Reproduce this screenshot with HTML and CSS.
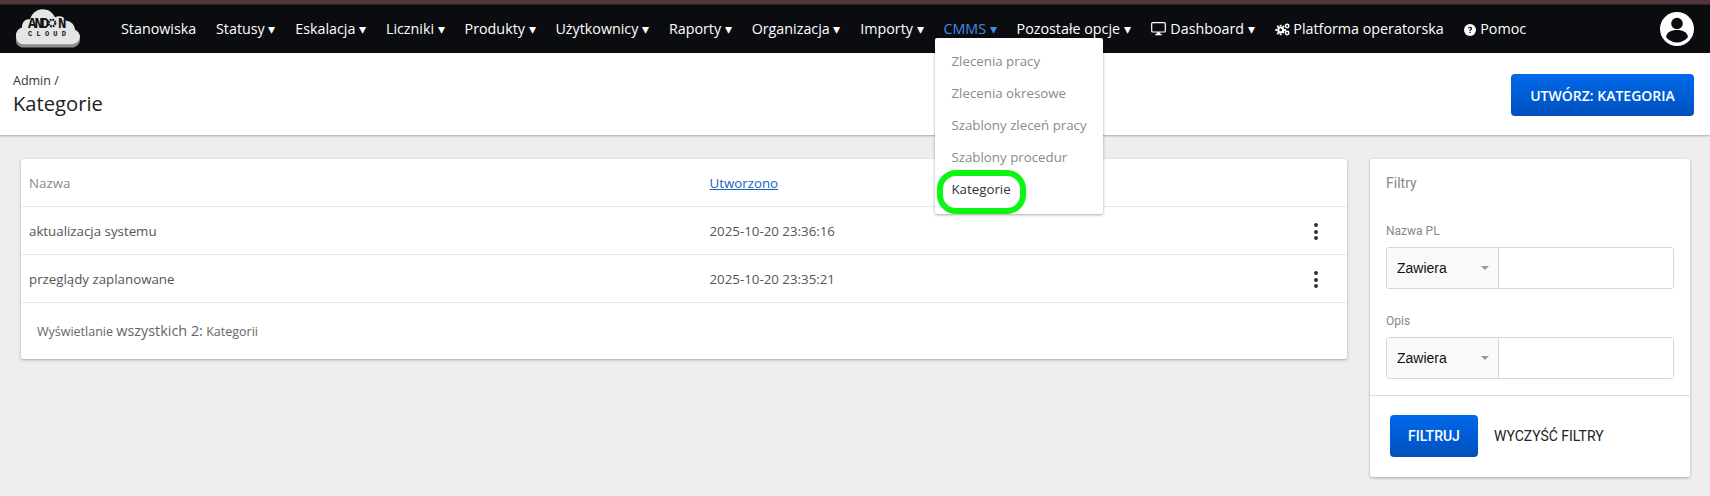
FILE: index.html
```html
<!DOCTYPE html>
<html lang="pl">
<head>
<meta charset="utf-8">
<title>Kategorie</title>
<link rel="stylesheet" href="styles.css">
</head>
<body>
<div class="topstrip"></div>
<nav class="navbar">
  <svg class="logo" viewBox="0 0 66 44" width="66" height="44">
    <g transform="translate(0,-2) scale(1,1.12)">
      <path class="logo-shade" d="M9 38c-6 0-9-4-8-9 0-4 3-6 6-7 0-5 4-8 8-7 2-6 8-10 14-9 5 0 9 3 11 7 4-2 9-1 11 3 5 0 9 4 9 8 3 1 5 4 5 7 0 4-4 7-8 7z"/>
      <path class="logo-cloud" d="M9 35c-6 0-8-4-8-8 0-4 3-6 6-7 0-5 4-8 8-7 2-6 8-10 14-9 5 0 9 3 11 7 4-2 9-1 11 3 5 0 9 4 9 8 3 1 5 4 5 6 0 4-4 7-8 7z"/>
    </g>
    <text class="logo-top" x="13" y="21">AND</text>
    <circle class="logo-gear" cx="37" cy="16" r="3.300"/>
    <text class="logo-top" x="43" y="21">N</text>
    <text class="logo-bottom" x="13" y="29" textLength="38">CLOUD</text>
  </svg>
  <ul class="menu">
    <li class="menu-item">Stanowiska</li>
    <li class="menu-item">Statusy ▾</li>
    <li class="menu-item">Eskalacja ▾</li>
    <li class="menu-item">Liczniki ▾</li>
    <li class="menu-item">Produkty ▾</li>
    <li class="menu-item">Użytkownicy ▾</li>
    <li class="menu-item">Raporty ▾</li>
    <li class="menu-item">Organizacja ▾</li>
    <li class="menu-item">Importy ▾</li>
    <li class="menu-item menu-active">CMMS ▾
      <div class="dropdown">
        <a class="dropdown-item">Zlecenia pracy</a>
        <a class="dropdown-item">Zlecenia okresowe</a>
        <a class="dropdown-item">Szablony zleceń pracy</a>
        <a class="dropdown-item">Szablony procedur</a>
        <a class="dropdown-item dropdown-current">Kategorie</a>
        <span class="highlight"></span>
      </div>
    </li>
    <li class="menu-item">Pozostałe opcje ▾</li>
    <li class="menu-item">
      <svg class="icon-desktop" viewBox="0 0 16 15" width="15" height="14"><rect x="0.7" y="0.7" width="14.6" height="10" rx="1" fill="none" stroke="#fff" stroke-width="1.3"/><path d="M6.2 11h3.6l.4 2.4H5.800zM4.200 13.200h7.600v1.100H4.200z" fill="#fff"/></svg>
      Dashboard ▾</li>
    <li class="menu-item">
      <svg class="icon-cogs" viewBox="0 0 16 14" width="15" height="13"><g fill="#fff"><circle cx="6" cy="7.500" r="3.700"/><path d="M5 1.800h2v2H5zM5 11.200h2v2H5zM.3 6.500h2v2h-2zM9.700 6.500h2v2h-2zM1.600 3.800l1.400-1.400 1.400 1.400-1.400 1.400zM7.600 9.800L9 8.400l1.400 1.400L9 11.200zM1.600 11.200l1.400-1.400 1.400 1.400-1.400 1.400zM7.600 3.800L9 2.400l1.400 1.400L9 5.200z"/><circle cx="13" cy="3.200" r="2.600"/><circle cx="13" cy="10.800" r="2.600"/></g><circle cx="6" cy="7.500" r="1.500" fill="#0b0c10"/><circle cx="13" cy="3.200" r="1" fill="#0b0c10"/><circle cx="13" cy="10.800" r="1" fill="#0b0c10"/></svg>
      Platforma operatorska</li>
    <li class="menu-item">
      <svg class="icon-help" viewBox="0 0 12 12" width="12" height="12"><circle cx="6" cy="6" r="6" fill="#fff"/><path d="M4 4.600C4.100 3.400 5 2.800 6.100 2.800c1.200 0 2 .7 2 1.700 0 1.500-1.600 1.400-1.600 2.600H5.300c0-1.800 1.500-1.700 1.500-2.600 0-.4-.3-.7-.8-.7-.5 0-.8.3-.9.8zM5.300 7.800h1.300v1.300H5.300z" fill="#0b0c10"/></svg>
      Pomoc</li>
  </ul>
  <svg class="avatar" viewBox="0 0 34 34" width="34" height="34"><circle cx="17" cy="17" r="17" fill="#fff"/><circle cx="17" cy="11.500" r="5.800" fill="#0b0c10"/><path d="M6 25c1-5 5-7 11-7s10 2 11 7c-2.800 3.600-6.800 5.500-11 5.500S8.800 28.600 6 25z" fill="#0b0c10"/></svg>
</nav>
<header class="pagehead">
  <div class="titles">
    <div class="crumb">Admin /</div>
    <h1 class="title">Kategorie</h1>
  </div>
  <button class="btn btn-create">UTWÓRZ: KATEGORIA</button>
</header>
<main class="content">
  <section class="card list">
    <div class="row row-head">
      <span class="col-name">Nazwa</span>
      <a class="col-date sort-link">Utworzono</a>
    </div>
    <div class="row">
      <span class="col-name">aktualizacja systemu</span>
      <span class="col-date">2025-10-20 23:36:16</span>
      <span class="kebab"><i></i><i></i><i></i></span>
    </div>
    <div class="row">
      <span class="col-name">przeglądy zaplanowane</span>
      <span class="col-date">2025-10-20 23:35:21</span>
      <span class="kebab"><i></i><i></i><i></i></span>
    </div>
    <div class="list-foot">Wyświetlanie <span class="foot-big">wszystkich 2:</span> Kategorii</div>
  </section>
  <aside class="card filters">
    <div class="filters-body">
      <div class="filters-title">Filtry</div>
      <label class="filter-label filter-label-first">Nazwa PL</label>
      <div class="filter-control">
        <div class="filter-select">Zawiera<span class="select-caret"></span></div>
        <div class="filter-input"></div>
      </div>
      <label class="filter-label">Opis</label>
      <div class="filter-control">
        <div class="filter-select">Zawiera<span class="select-caret"></span></div>
        <div class="filter-input"></div>
      </div>
    </div>
    <div class="filters-foot">
      <button class="btn btn-filter">FILTRUJ</button>
      <a class="clear-link">WYCZYŚĆ FILTRY</a>
    </div>
  </aside>
</main>
</body>
</html>
```
FILE: styles.css
```css
* { box-sizing: border-box; }
html, body { margin: 0; padding: 0; }
body {
  background: #eee;
  font-family: "Open Sans", sans-serif;
  color: #4a4a4a;
  height: 496px;
  overflow: hidden;
}
.topstrip { height: 5px; background: #53363c; border-bottom: 1px solid #2f2528; }
.navbar {
  height: 48px;
  background: #0b0c10;
  display: flex;
  align-items: center;
  padding: 0 16px 0 15px;
  position: relative;
  z-index: 3;
}
.logo { flex: none; }
.logo-cloud { fill: #e4e4e4; }
.logo-shade { fill: #8d8d8d; }
.logo-top { font: bold 14px "Liberation Mono", monospace; fill: #111; letter-spacing: -2px; }
.logo-bottom { font: bold 7px "Liberation Mono", monospace; fill: #111; }
.logo-gear { fill: none; stroke: #111; stroke-width: 2.200; stroke-dasharray: 1.700 .9; }
.menu {
  list-style: none;
  margin: 0 0 0 40px;
  padding: 0;
  display: flex;
  gap: 19.8px;
  flex: 1;
  align-items: center;
}
.menu-item {
  color: #fff;
  font-size: 14.3px;
  line-height: 20px;
  white-space: nowrap;
  position: relative;
}
.menu-active { color: #3f8ce8; }
.icon-desktop, .icon-cogs, .icon-help { vertical-align: -2px; }
.icon-help { margin-right: 1px; }
.icon-desktop { margin-right: 1px; }
.avatar { flex: none; }
.dropdown {
  position: absolute;
  left: -8px;
  top: 19px;
  width: 168px;
  height: 176px;
  background: #fff;
  border-radius: 2px;
  box-shadow: 0 1px 3px rgba(0,0,0,.35);
  padding: 7px 0 0;
  display: flex;
  flex-direction: column;
}
.dropdown-item {
  display: block;
  padding: 0 16px;
  height: 32px;
  line-height: 32px;
  font-size: 13.3px;
  color: #8a8a8a;
}
.dropdown-current { color: #333; }
.highlight {
  position: absolute;
  left: 2px;
  top: 132px;
  width: 89px;
  height: 44px;
  border: 6px solid #0cf412;
  border-radius: 19px;
}
.pagehead {
  height: 82px;
  background: #fff;
  box-shadow: 0 1px 2px rgba(0,0,0,.3);
  display: flex;
  align-items: flex-start;
  justify-content: space-between;
  padding: 20px 16px 0 13px;
  position: relative;
  z-index: 2;
}
.crumb { font-size: 12.5px; line-height: 16px; color: #333; }
.title { margin: 0; font-size: 20.2px; font-weight: 400; line-height: 28px; color: #222; }
.btn {
  border: 0;
  border-radius: 4px;
  background: linear-gradient(#0069eb, #0051bd);
  color: #fff;
  font-family: "Open Sans", sans-serif;
  font-weight: 600;
  font-size: 14px;
  height: 42px;
}
.btn-create { width: 183px; margin-top: 1px; padding: 0; }
.content {
  display: flex;
  align-items: flex-start;
  gap: 23px;
  padding: 24px 20px 0 21px;
}
.card {
  background: #fff;
  border-radius: 2px;
  box-shadow: 0 1px 3px rgba(0,0,0,.3);
}
.list { width: 1326px; height: 200px; }
.row {
  display: flex;
  align-items: center;
  height: 48px;
  border-bottom: 1px solid #e8e8e8;
  padding: 0 0 0 8px;
  font-size: 13.3px;
  color: #555;
  position: relative;
}
.row-head { height: 48px; color: #8a8a8a; }
.col-name { width: 680.5px; }
.sort-link { color: #1565c0; text-decoration: underline; }
.kebab {
  position: absolute;
  right: 29px;
  top: 16px;
  display: flex;
  flex-direction: column;
  gap: 2.500px;
}
.kebab i { width: 4px; height: 4px; border-radius: 50%; background: #333; display: block; }
.list-foot {
  padding: 18px 16px 0;
  font-size: 12.5px;
  line-height: 20px;
  color: #666;
}
.foot-big { font-size: 14.4px; }
.filters { width: 320px; height: 318px; }
.filters-body { padding: 15px 16px 0; height: 237px; border-bottom: 1px solid #dcdcdc; }
.filters-title { font: 14px/18px Roboto, sans-serif; color: #888; }
.filter-label { display: block; font: 12px/16px Roboto, sans-serif; color: #888; margin: 24px 0 8px; }
.filter-label-first { margin-top: 31px; }
.filter-control {
  display: flex;
  height: 42px;
  border: 1px solid #d6d6d6;
  border-radius: 3px;
}
.filter-select {
  width: 112px;
  background: #f9f9f9;
  border-right: 1px solid #d6d6d6;
  display: flex;
  align-items: center;
  padding-left: 10px;
  font: 14px "Liberation Sans", sans-serif;
  color: #111;
  position: relative;
}
.select-caret {
  position: absolute;
  right: 9px;
  top: 18px;
  border-left: 4px solid transparent;
  border-right: 4px solid transparent;
  border-top: 4px solid #999;
}
.filter-input { flex: 1; background: #fff; }
.filters-foot {
  display: flex;
  align-items: center;
  gap: 16px;
  padding: 19px 20px 0;
}
.btn-filter { width: 88px; font-family: Roboto, sans-serif; font-weight: 500; padding: 0; }
.clear-link { font: 14px Roboto, sans-serif; color: #222; }
```
